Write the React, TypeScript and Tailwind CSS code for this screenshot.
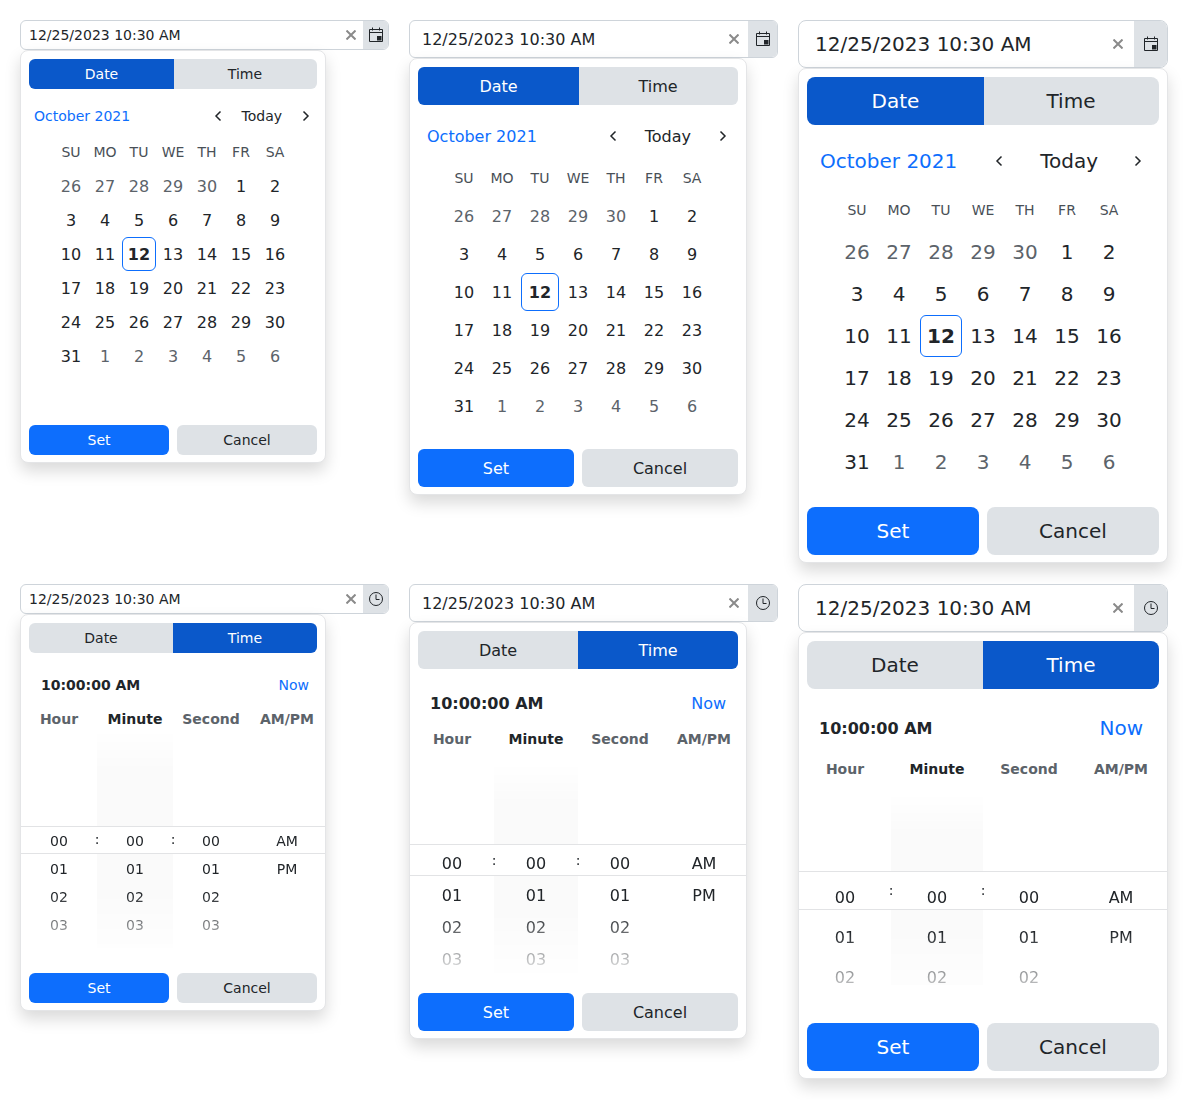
type Size = "sm" | "md" | "lg";
type Mode = "date" | "time";

const sizes = {
  sm: {
    input: "h-[30px] pl-2 text-sm rounded-md",
    clear: "mr-[7px]",
    iconBtn: "w-[25px]",
    popup: "w-[306px]",
    btnH: "h-[30px] text-sm",
    radius: "rounded-md",
    headH: "mt-3 h-[30px]",
    monthText: "text-sm pl-[5px]",
    navBtn: "w-[22px]",
    today: "pl-[13px] pr-[13px] text-sm",
    weekRow: "mt-1 h-[34px] grid-cols-[repeat(7,34px)]",
    grid: "grid-cols-[repeat(7,34px)] auto-rows-[34px] text-base",
    dateFoot: "mt-[52px]",
    title: "mt-5 h-6",
    titleText: "text-sm",
    nowText: "text-sm pr-2",
    colHead: "mt-3 h-5",
    wheel: "mt-px h-[218px] [mask-image:linear-gradient(to_bottom,transparent_0,black_40px,black_74%,rgba(0,0,0,0.25)_100%)]",
    wheelPad: "pt-[97px]",
    wheelRow: "h-7 text-sm",
    band: "top-[96px] h-[28px]",
    colon: "top-[99px]",
    timeFoot: "mt-[25px]",
    rows: ["00", "01", "02", "03", "04"],
    nudgeBtn: "",
    nudgeGrid: "pt-[2px]",
    nudgeTitle: "",
    nudgeNow: "",
    nudgeRow: "",
  },
  md: {
    input: "h-[38px] pl-3 text-base rounded-md",
    clear: "mr-[9px]",
    iconBtn: "w-[29px]",
    popup: "w-[338px]",
    btnH: "h-[38px] text-base",
    radius: "rounded-md",
    headH: "mt-3 h-[38px]",
    monthText: "text-base pl-[9px]",
    navBtn: "w-[30px]",
    today: "px-[17px] text-base",
    weekRow: "mt-1 h-[38px] grid-cols-[repeat(7,38px)]",
    grid: "grid-cols-[repeat(7,38px)] auto-rows-[38px] text-base",
    dateFoot: "mt-6",
    title: "mt-[22px] h-6",
    titleText: "text-base",
    nowText: "text-base pr-3",
    colHead: "mt-3 h-6",
    wheel: "mt-3 h-[217px] [mask-image:linear-gradient(to_bottom,transparent_0,black_40px,black_68%,transparent_100%)]",
    wheelPad: "pt-[84px]",
    wheelRow: "h-8 text-base",
    band: "top-[81px] h-[32px]",
    colon: "top-[87px]",
    timeFoot: "mt-[13px]",
    rows: ["00", "01", "02", "03"],
    nudgeBtn: "pt-[2px]",
    nudgeGrid: "pt-[2px]",
    nudgeTitle: "pt-[2px]",
    nudgeNow: "pt-[2px]",
    nudgeRow: "pt-[2px]",
  },
  lg: {
    input: "h-12 pl-4 text-xl rounded-lg",
    clear: "mr-[11px]",
    iconBtn: "w-[33px]",
    popup: "w-full",
    btnH: "h-12 text-xl",
    radius: "rounded-lg",
    headH: "mt-3 h-12",
    monthText: "text-xl pl-[13px]",
    navBtn: "w-[42px]",
    today: "pl-5 pr-[19px] text-xl",
    weekRow: "mt-1 h-[42px] grid-cols-[repeat(7,42px)]",
    grid: "grid-cols-[repeat(7,42px)] auto-rows-[42px] text-xl",
    dateFoot: "mt-6",
    title: "mt-[25px] h-7",
    titleText: "text-base",
    nowText: "text-xl pr-4",
    colHead: "mt-[15px] h-6",
    wheel: "mt-3 h-[192px] [mask-image:linear-gradient(to_bottom,transparent_0,black_40px,black_72%,rgba(0,0,0,0.3)_100%)]",
    wheelPad: "pt-[84px]",
    wheelRow: "h-10 text-base",
    band: "top-[78px] h-[39px]",
    colon: "top-[87px]",
    timeFoot: "mt-[38px]",
    rows: ["00", "01", "02"],
    nudgeBtn: "",
    nudgeGrid: "",
    nudgeTitle: "pt-[2px]",
    nudgeNow: "",
    nudgeRow: "pt-[2px]",
  },
};

const weekDays = ["SU", "MO", "TU", "WE", "TH", "FR", "SA"];
const prevMonth = [26, 27, 28, 29, 30];
const nextMonth = [1, 2, 3, 4, 5, 6];
const days = Array.from({ length: 31 }, (_, i) => i + 1);

function CalendarIcon() {
  return (
    <svg width="16" height="16" viewBox="0 0 16 16" fill="none" stroke="currentColor">
      <path d="M1.5 2.5h13v12h-13z" />
      <path d="M1.5 5.5h13M4.5 0.5v3M11.5 0.5v3" />
      <rect x="9" y="9" width="4.5" height="4.5" fill="currentColor" stroke="none" />
    </svg>
  );
}

function ClockIcon() {
  return (
    <svg width="16" height="16" viewBox="0 0 16 16" fill="none" stroke="currentColor">
      <circle cx="8" cy="8" r="6.5" />
      <path d="M8 3.5V8.5H11.5" />
    </svg>
  );
}

function Chevron({ dir }: { dir: "left" | "right" }) {
  return (
    <svg width="16" height="16" viewBox="0 0 16 16" fill="none" stroke="currentColor" strokeWidth="1.5">
      <path d={dir === "left" ? "M10.5 3.5 6 8l4.5 4.5" : "M5.5 3.5 10 8l-4.5 4.5"} />
    </svg>
  );
}

function InputRow({ size, mode }: { size: Size; mode: Mode }) {
  const s = sizes[size];
  return (
    <div className={`flex items-center overflow-hidden border border-[#ced4da] bg-white text-[#212529] ${s.input}`}>
      <span className={`flex-1 ${s.nudgeBtn}`}>12/25/2023 10:30 AM</span>
      <svg width="10" height="10" viewBox="0 0 10 10" className={`${s.clear} text-[#8a8a8a]`} stroke="currentColor" strokeWidth="2">
        <path d="M0.5 0.5l9 9M9.5 0.5l-9 9" />
      </svg>
      <span className={`flex h-full items-center justify-center bg-[#dee2e6] ${s.iconBtn}`}>
        {mode === "date" ? <CalendarIcon /> : <ClockIcon />}
      </span>
    </div>
  );
}

function Tabs({ size, mode }: { size: Size; mode: Mode }) {
  const s = sizes[size];
  const on = "bg-[#0a58ca] text-white";
  const off = "bg-[#dee2e6] text-[#212529]";
  return (
    <div className={`grid grid-cols-2 overflow-hidden ${s.radius} ${s.btnH}`}>
      <span className={`flex items-center justify-center ${s.nudgeBtn} ${mode === "date" ? `${on} relative -mr-px` : off}`}>Date</span>
      <span className={`flex items-center justify-center ${s.nudgeBtn} ${mode === "time" ? on : off}`}>Time</span>
    </div>
  );
}

function Footer({ size, className }: { size: Size; className: string }) {
  const s = sizes[size];
  return (
    <div className={`grid grid-cols-2 gap-2 ${className} ${s.btnH}`}>
      <span className={`flex items-center justify-center bg-[#0d6efd] text-white ${s.radius} ${s.nudgeBtn}`}>Set</span>
      <span className={`flex items-center justify-center bg-[#dee2e6] text-[#212529] ${s.radius} ${s.nudgeBtn}`}>Cancel</span>
    </div>
  );
}

function DateView({ size }: { size: Size }) {
  const s = sizes[size];
  return (
    <>
      <div className={`flex items-center justify-between ${s.headH}`}>
        <span className={`text-[#0d6efd] ${s.monthText} ${s.nudgeBtn}`}>October 2021</span>
        <div className="flex items-center text-[#212529]">
          <span className={`flex justify-center ${s.navBtn}`}><Chevron dir="left" /></span>
          <span className={`${s.today} ${s.nudgeBtn}`}>Today</span>
          <span className={`flex justify-center ${s.navBtn}`}><Chevron dir="right" /></span>
        </div>
      </div>
      <div className={`mx-auto grid w-fit items-center justify-items-center text-sm text-[#495057] ${s.weekRow}`}>
        {weekDays.map((d) => (
          <span key={d}>{d}</span>
        ))}
      </div>
      <div className={`mx-auto grid w-fit items-center justify-items-center ${s.grid}`}>
        {prevMonth.map((d) => (
          <span key={`p${d}`} className={`text-[#5c636a] ${s.nudgeGrid}`}>{d}</span>
        ))}
        {days.map((d) =>
          d === 12 ? (
            <span key={d} className={`flex h-full w-full items-center justify-center rounded-md border border-[#0d6efd] font-bold text-[#212529] ${s.nudgeGrid}`}>
              {d}
            </span>
          ) : (
            <span key={d} className={`text-[#212529] ${s.nudgeGrid}`}>{d}</span>
          ),
        )}
        {nextMonth.map((d) => (
          <span key={`n${d}`} className={`text-[#5c636a] ${s.nudgeGrid}`}>{d}</span>
        ))}
      </div>
      <Footer size={size} className={s.dateFoot} />
    </>
  );
}

function TimeView({ size }: { size: Size }) {
  const s = sizes[size];
  const columns = [s.rows, s.rows, s.rows, ["AM", "PM"]];
  return (
    <>
      <div className={`flex items-center justify-between pl-3 ${s.title}`}>
        <span className={`font-bold text-[#212529] ${s.titleText} ${s.nudgeTitle}`}>10:00:00 AM</span>
        <span className={`text-[#0d6efd] ${s.nowText} ${s.nudgeNow}`}>Now</span>
      </div>
      <div className={`-mx-2 grid grid-cols-4 items-center justify-items-center text-sm font-bold text-[#5c636a] ${s.colHead}`}>
        <span>Hour</span>
        <span className="text-[#212529]">Minute</span>
        <span>Second</span>
        <span>AM/PM</span>
      </div>
      <div className={`relative -mx-2 overflow-hidden ${s.wheel}`}>
        <div className="absolute inset-y-0 left-1/4 w-1/4 bg-[#fafafa]" />
        <div className={`absolute inset-x-0 border-y border-[#e2e3e5] bg-white ${s.band}`} />
        <div className="relative grid grid-cols-4 text-[#212529]">
          {columns.map((col, i) => (
            <div key={i} className={`relative text-center ${s.wheelPad}`}>
              {(i === 1 || i === 2) && (
                <span className={`absolute left-0 -translate-x-1/2 text-sm leading-5 ${s.colon}`}>:</span>
              )}
              {col.map((v) => (
                <div key={v} className={`flex items-center justify-center ${s.wheelRow} ${s.nudgeRow}`}>{v}</div>
              ))}
            </div>
          ))}
        </div>
      </div>
      <Footer size={size} className={s.timeFoot} />
    </>
  );
}

function Picker({ size, mode }: { size: Size; mode: Mode }) {
  const s = sizes[size];
  return (
    <div>
      <InputRow size={size} mode={mode} />
      <div className={`rounded-lg border border-[#e4e5e7] bg-white px-2 pt-2 pb-[7px] shadow-[0_8px_16px_rgba(0,0,0,0.15)] ${s.popup}`}>
        <Tabs size={size} mode={mode} />
        {mode === "date" ? <DateView size={size} /> : <TimeView size={size} />}
      </div>
    </div>
  );
}

export default function App() {
  const order: Size[] = ["sm", "md", "lg"];
  return (
    <div className="grid min-h-[1100px] grid-cols-[369px_369px_370px] content-start items-start gap-x-5 gap-y-[21px] bg-white p-5 font-['DejaVu_Sans',sans-serif]">
      {order.map((size) => (
        <Picker key={size} size={size} mode="date" />
      ))}
      {order.map((size) => (
        <Picker key={size} size={size} mode="time" />
      ))}
    </div>
  );
}
